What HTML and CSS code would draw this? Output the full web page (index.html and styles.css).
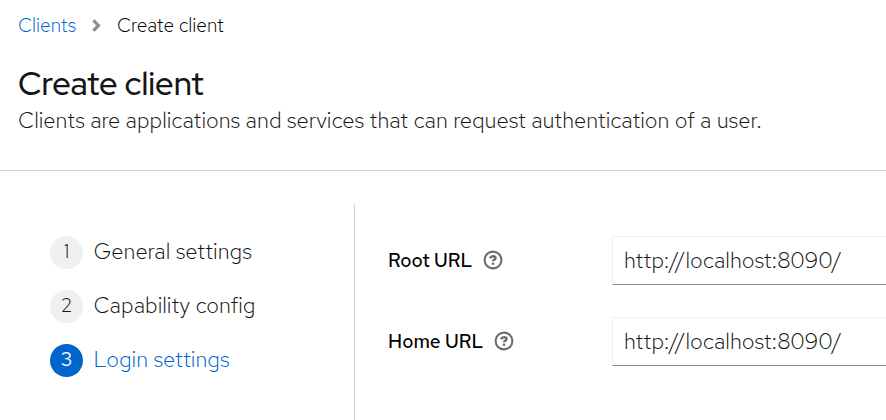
FILE: index.html
```html
<!DOCTYPE html>
<html lang="en">
<head>
<meta charset="utf-8">
<title>Create client</title>
<link rel="stylesheet" href="styles.css">
</head>
<body>
<header class="page-header">
  <nav class="breadcrumb">
    <a class="crumb-link" href="#">Clients</a>
    <svg class="chevron" viewBox="0 0 8 12"><path d="M1.200 1.200 5.800 6l-4.600 4.800" fill="none" stroke="#8a8d90" stroke-width="2.900"/></svg>
    <span class="crumb-current">Create client</span>
  </nav>
  <h1 class="title">Create client</h1>
  <p class="description">Clients are applications and services that can request authentication of a user.</p>
</header>
<main class="wizard">
  <ol class="steps">
    <li class="step"><span class="number">1</span><span class="step-name">General settings</span></li>
    <li class="step"><span class="number">2</span><span class="step-name">Capability config</span></li>
    <li class="step current"><span class="number">3</span><span class="step-name">Login settings</span></li>
  </ol>
  <form class="settings">
    <div class="field">
      <div class="label"><label for="root">Root URL</label>
        <svg class="help" viewBox="0 0 20 20"><circle cx="10" cy="10" r="8.400"/><path class="mark" d="M7 8.200Q7.800 6.300 10 6.300Q12.500 6.300 12.500 8.100Q12.500 9.200 11.200 9.800Q10 10.300 10 11.300"/><path class="mark" d="M10 12.600v2.200"/></svg>
      </div>
      <input class="input" id="root" type="text" value="http://localhost:8090/">
    </div>
    <div class="field">
      <div class="label"><label for="home">Home URL</label>
        <svg class="help" viewBox="0 0 20 20"><circle cx="10" cy="10" r="8.400"/><path class="mark" d="M7 8.200Q7.800 6.300 10 6.300Q12.500 6.300 12.500 8.100Q12.500 9.200 11.200 9.800Q10 10.300 10 11.300"/><path class="mark" d="M10 12.600v2.200"/></svg>
      </div>
      <input class="input" id="home" type="text" value="http://localhost:8090/">
    </div>
  </form>
</main>
</body>
</html>
```
FILE: styles.css
```css
* { box-sizing: border-box; }
body {
  margin: 0;
  height: 420px;
  overflow: hidden;
  display: flex;
  flex-direction: column;
  background: #fff;
  color: #151515;
  font-family: "Red Hat Text", Inter, sans-serif;
  font-size: 22.250px;
  font-weight: 300;
  white-space: nowrap;
}
.page-header {
  height: 171px;
  padding: 12px 18px 0;
  border-bottom: 1px solid #d2d2d2;
}
.breadcrumb {
  display: flex;
  align-items: center;
  height: 26px;
  font-size: 19.400px;
}
.crumb-link { width: 58px; color: #06c; text-decoration: none; }
.crumb-current { color: #000; }
.chevron { width: 9px; height: 13px; margin: 0 16px; }
.title {
  margin: 25px 0 0;
  font-family: "Red Hat Display", "Red Hat Text", Inter, sans-serif;
  font-size: 32.700px;
  font-weight: 500;
  line-height: 42px;
}
.description { margin: 0; line-height: 31px; }
.wizard { flex: 1; display: flex; padding-top: 33px; }
.steps {
  flex: none;
  width: 355px;
  margin: 0;
  padding: 32px 0 0 50px;
  border-right: 1px solid #d2d2d2;
  list-style: none;
}
.step { display: flex; align-items: center; height: 33px; margin-bottom: 21px; }
.step-name { padding-bottom: 4px; }
.number {
  width: 33px;
  height: 33px;
  margin-right: 10.600px;
  border-radius: 50%;
  background: #f0f0f0;
  font-size: 19.400px;
  line-height: 31px;
  text-align: center;
}
.current { color: #06c; }
.current .number { background: #06c; color: #fff; font-weight: 400; }
.settings { flex: 1; min-width: 0; padding: 32px 0 0 33px; }
.field { display: flex; height: 49px; margin-bottom: 32px; }
.label {
  flex: none;
  width: 224px;
  display: flex;
  align-items: center;
  color: #000;
  font-size: 19.100px;
  font-weight: 500;
  padding-bottom: 1px;
}
.help { width: 20px; height: 20px; margin-left: 10.500px; fill: none; stroke: #6a6e73; stroke-width: 2.100; }
.mark { stroke-width: 2.500; }
.input {
  flex: 1;
  min-width: 0;
  height: 49px;
  padding: 0 11px 1px;
  border: 1px solid #f0f0f0;
  border-right: 0;
  border-bottom-color: #8a8d90;
  background: #fff;
  color: #151515;
  font: inherit;
}
```
